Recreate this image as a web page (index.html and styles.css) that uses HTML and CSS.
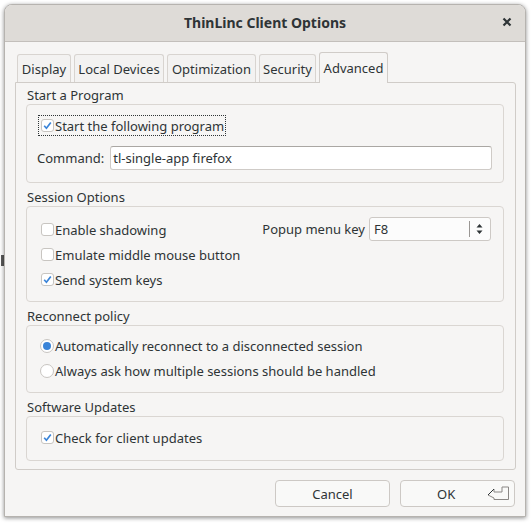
FILE: index.html
```html
<!DOCTYPE html>
<html>
<head>
<meta charset="utf-8">
<link rel="stylesheet" href="styles.css">
</head>
<body>
<div class="behind"></div>
<div class="window">
  <div class="titlebar">
    <span class="title">ThinLinc Client Options</span>
    <svg class="close" width="10" height="10" viewBox="0 0 10 10"><path d="M1.5 1.5 L8.5 8.5 M8.5 1.5 L1.5 8.5" stroke="#2e3436" stroke-width="2.2" stroke-linecap="butt"/></svg>
  </div>
  <div class="body">
    <div class="tabs">
      <div class="tab t1">Display</div>
      <div class="tab t2">Local Devices</div>
      <div class="tab t3">Optimization</div>
      <div class="tab t4">Security</div>
      <div class="tab t5 active">Advanced</div>
    </div>
    <div class="panel">
      <div class="section-label">Start a Program</div>
      <div class="frame f1">
        <div class="row focus"><span class="check on"><svg width="13" height="13" viewBox="0 0 13 13"><path d="M3.2 6.8 L5.4 9.2 L9.8 3.4" fill="none" stroke="#3a84d8" stroke-width="1.7"/></svg></span>Start the following program</div>
        <div class="cmd">
          <span class="cmd-label">Command:</span>
          <div class="input">tl-single-app firefox</div>
        </div>
      </div>

      <div class="section-label">Session Options</div>
      <div class="frame f2">
        <div class="col">
          <div class="row"><span class="check"></span>Enable shadowing</div>
          <div class="row"><span class="check"></span>Emulate middle mouse button</div>
          <div class="row"><span class="check on"><svg width="13" height="13" viewBox="0 0 13 13"><path d="M3.2 6.8 L5.4 9.2 L9.8 3.4" fill="none" stroke="#3a84d8" stroke-width="1.7"/></svg></span>Send system keys</div>
        </div>
        <div class="popup">
          <span class="popup-label">Popup menu key</span>
          <div class="combo">
            <span class="combo-val">F8</span>
            <span class="combo-sep"></span>
            <svg class="combo-arrows" width="7" height="12" viewBox="0 0 7 12"><path d="M0.5 4.5 L3.5 1 L6.5 4.5 Z M0.5 7.5 L3.5 11 L6.5 7.5 Z" fill="#2e3436"/></svg>
          </div>
        </div>
      </div>

      <div class="section-label">Reconnect policy</div>
      <div class="frame f3">
        <div class="row"><span class="radio on"><span class="dot"></span></span>Automatically reconnect to a disconnected session</div>
        <div class="row"><span class="radio"></span>Always ask how multiple sessions should be handled</div>
      </div>

      <div class="section-label">Software Updates</div>
      <div class="frame f4">
        <div class="row"><span class="check on"><svg width="13" height="13" viewBox="0 0 13 13"><path d="M3.2 6.8 L5.4 9.2 L9.8 3.4" fill="none" stroke="#3a84d8" stroke-width="1.7"/></svg></span>Check for client updates</div>
      </div>
    </div>
    <div class="buttons">
      <div class="btn">Cancel</div>
      <div class="btn ok"><span>OK</span>
        <svg class="enter" width="23" height="15" viewBox="0 0 23 15"><path d="M1 9 L7 3 L7 6 L15 6 L15 1 L21.5 1 L21.5 13.5 L7 13.5 L7 12 Z" fill="none" stroke="#8a8785" stroke-width="1"/><path d="M1 9 L7 3" stroke="#2e3436" stroke-width="1"/></svg>
      </div>
    </div>
  </div>
</div>
</body>
</html>
```
FILE: styles.css
```css
* { box-sizing: border-box; }
html, body { margin: 0; padding: 0; }
body {
  background: #ffffff;
  width: 531px;
  height: 523px;
  overflow: hidden;
  font-family: "Noto Sans", "DejaVu Sans", sans-serif;
  font-size: 13px;
  color: #2e3436;
  padding: 4px 0 0 4px;
  position: relative;
}
.behind {
  position: absolute;
  left: 1px;
  top: 255px;
  width: 3px;
  height: 11px;
  background: #5a5a5a;
}
.window {
  width: 522px;
  height: 513px;
  background: #f6f5f4;
  border: 1px solid #b6b3af;
  border-radius: 8px 8px 0 0;
  box-shadow: 0 1px 4px rgba(0,0,0,0.45);
  display: flex;
  flex-direction: column;
  position: relative;
}
.titlebar {
  height: 37px;
  flex: none;
  background: #dedbd7;
  border-bottom: 1px solid #c3bfbb;
  border-radius: 7px 7px 0 0;
  display: flex;
  align-items: center;
  justify-content: center;
  position: relative;
}
.title {
  font-weight: bold;
  font-size: 14px;
  color: #2e3436;
  margin-top: -1px;
}
.close {
  position: absolute;
  right: 13px;
  top: 12px;
}
.body {
  flex: 1;
  padding: 10px 9px 0 10px;
  display: flex;
  flex-direction: column;
}
.tabs {
  display: flex;
  gap: 3px;
  padding-left: 2px;
  height: 30px;
  align-items: flex-end;
  position: relative;
  z-index: 1;
}
.tab {
  height: 28px;
  border: 1px solid #d8d4d0;
  border-bottom: none;
  border-radius: 3px 3px 0 0;
  background: #f3f2f1;
  display: flex;
  align-items: center;
  justify-content: center;
  padding-top: 1px;
  white-space: nowrap;
}
.t1 { width: 54px; }
.t2 { width: 90px; }
.t3 { width: 89px; }
.t4 { width: 57px; }
.t5 { width: 69px; }
.tab.active {
  height: 31px;
  margin-bottom: -1px;
  background: #f6f5f4;
  padding: 0 0 1px;
  border-color: #d0ccc8;
}
.panel {
  height: 388px;
  border: 1px solid #d0ccc8;
  border-radius: 0 3px 3px 3px;
  padding: 4px 11px 0 10px;
  display: flex;
  flex-direction: column;
}
.section-label {
  height: 17px;
  line-height: 17px;
  padding-left: 1px;
  flex: none;
}
.frame + .section-label { margin-top: 6px; }
.frame {
  border: 1px solid #dad6d2;
  border-radius: 4px;
  flex: none;
}
.row {
  display: flex;
  align-items: center;
  height: 25px;
  padding-left: 3px;
  white-space: nowrap;
}
.check {
  width: 13px;
  height: 13px;
  border: 1px solid #c8c5c1;
  border-radius: 3px;
  background: #ffffff;
  margin-right: 1px;
  flex: none;
  position: relative;
}
.check svg { position: absolute; left: -1px; top: -1px; }
.radio {
  width: 14px;
  height: 14px;
  border: 1px solid #c8c5c1;
  border-radius: 50%;
  background: #ffffff;
  margin-right: 1px;
  margin-left: -1px;
  flex: none;
  display: flex;
  align-items: center;
  justify-content: center;
}
.radio .dot {
  width: 8px;
  height: 8px;
  border-radius: 50%;
  background: #3a84d8;
}
.f1 {
  height: 79px;
  padding: 9px 11px 0 11px;
}
.f1 .row.focus {
  height: 21px;
  border: 1px dotted #2e3436;
  padding-left: 2px;
  padding-right: 1px;
  display: inline-flex;
  margin-top: 1px;
}
.cmd {
  display: flex;
  align-items: center;
  margin-top: 10px;
  height: 24px;
  margin-left: -1px;
}
.cmd-label { margin-right: 6px; }
.input {
  flex: 1;
  height: 24px;
  background: #ffffff;
  border: 1px solid #cfcbc7;
  border-top-color: #aaa7a3;
  border-radius: 3px;
  padding-left: 2px;
  line-height: 22px;
}
.f2 {
  height: 96px;
  padding: 10px 12px 0 11px;
  display: flex;
  align-items: flex-start;
}
.f2 .col { flex: 1; display: flex; flex-direction: column; }
.popup {
  display: flex;
  align-items: center;
  height: 24px;
}
.popup-label { margin-right: 4px; }
.combo {
  width: 122px;
  height: 24px;
  background: #fcfcfc;
  border: 1px solid #cdc9c5;
  border-radius: 3px;
  display: flex;
  align-items: center;
  padding-left: 4px;
}
.combo-val { flex: 1; }
.combo-sep {
  width: 1px;
  height: 16px;
  background: #9a9794;
  margin-right: 6px;
}
.combo-arrows { margin-right: 7px; }
.f3 {
  height: 68px;
  padding: 7px 11px 0 11px;
}
.f4 {
  height: 45px;
  padding: 8px 11px 0 11px;
}
.buttons {
  display: flex;
  justify-content: flex-end;
  gap: 10px;
  margin-top: 10px;
  padding-right: 1px;
}
.btn {
  width: 115px;
  height: 27px;
  border: 1px solid #cdc9c5;
  border-radius: 4px;
  background: #f9f9f8;
  display: flex;
  align-items: center;
  justify-content: center;
  position: relative;
}
.btn.ok { justify-content: flex-start; padding-left: 36px; }
.enter { position: absolute; right: 4px; top: 5px; }
```
